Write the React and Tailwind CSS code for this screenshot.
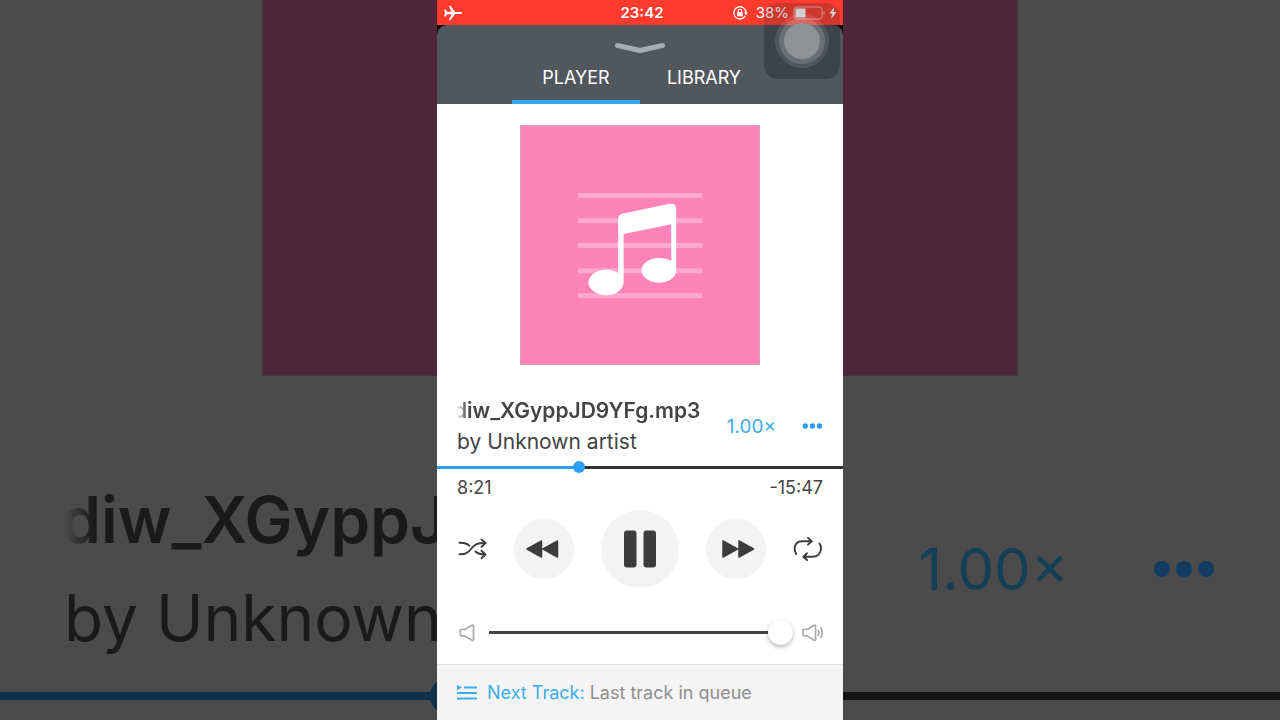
import React, { useState } from 'react';

const TRACK_LENGTH = 1448;

const formatTime = (seconds) => {
    const minutes = Math.floor(seconds / 60);
    return `${minutes}:${(seconds % 60).toString().padStart(2, '0')}`;
};

// Enlarged, dimmed player that fills the page on both sides of the phone
const Backdrop = ({ title, artist, progress }) => (
    <div aria-hidden="true" className="absolute inset-0 overflow-hidden bg-[#4b4b4b] flex flex-col">
        <div className="w-[59%] h-[376px] shrink-0 mx-auto bg-[#4d2637] border-x border-b border-[#44353c]" />
        <div className="mt-[95px] pl-16 pr-[65px] flex items-center justify-between shrink-0">
            <div className="text-[64px] leading-[98px] text-[#1a1a1a] whitespace-nowrap">
                <div className="font-semibold -indent-[3px] [mask-image:linear-gradient(to_right,transparent,black_30px)]">{title}</div>
                <div>{artist}</div>
            </div>
            <div className="flex items-center gap-[84px]">
                <span className="text-[58px] leading-[98px] text-[#153f56]">1.00×</span>
                <svg className="w-[62px] h-[18px] fill-[#123c63]" viewBox="0 0 62 18">
                    <circle cx="9" cy="9" r="8" />
                    <circle cx="31" cy="9" r="8" />
                    <circle cx="53" cy="9" r="8" />
                </svg>
            </div>
        </div>
        <div className="mt-[11px] h-9 shrink-0 flex items-center">
            <div className="h-2 bg-[#10304a]" style={{ width: `${progress * 100}%` }} />
            <div className="w-9 h-9 -mx-[18px] rounded-full bg-[#10304a]" />
            <div className="h-2 flex-1 bg-[#141414]" />
        </div>
    </div>
);

const StatusBar = () => (
    <div className="h-[25px] px-[6px] bg-[#ff3b2d] text-white text-[15px] leading-[25px] grid grid-cols-3 items-center">
        <svg className="w-5 h-4 fill-white" viewBox="0 0 20 16">
            <path d="M1.200 4.500h1.300l1.800 2.200 4.200.100L5.800.800h1.700l4.700 6.100 4.800.100c1.100 0 2.200.400 2.200 1s-1.100 1-2.200 1l-4.800.100-4.700 6.100H5.800l2.700-6-4.200.100-1.800 2.200H1.200L1.800 8z" />
        </svg>
        <div className="pl-1 text-center font-semibold">23:42</div>
        <div className="flex items-center justify-end">
            <svg className="w-4 h-4 mr-2" viewBox="0 0 16 16" fill="none">
                <path d="M13.200 10.900A6.100 6.100 0 1 1 14 7.600" stroke="white" strokeWidth="1.300" />
                <path d="M11.900 7.500h4.100L14 10.200z" fill="white" />
                <rect x="5.100" y="7.100" width="5.600" height="4.200" rx=".6" fill="white" />
                <path d="M6.200 7.300V5.900a1.700 1.700 0 0 1 3.400 0v1.400" stroke="white" strokeWidth="1.100" />
            </svg>
            <span className="mr-1">38%</span>
            <svg className="w-8 h-4" viewBox="0 0 32 16" fill="none">
                <rect x="1" y="2" width="28" height="12" rx="2.500" stroke="white" strokeOpacity=".6" />
                <rect x="2.500" y="3.500" width="10" height="9" fill="white" />
                <path d="M30.500 6v4c1.400-.6 1.400-3.400 0-4z" fill="white" fillOpacity=".6" />
            </svg>
            <svg className="w-2 h-3 ml-1 fill-white" viewBox="0 0 8 12">
                <path d="M5.300 0 .3 6.800h2.900L2 12l5.600-7H4.500z" />
            </svg>
        </div>
    </div>
);

// Floats over the status bar and header, lighter where the status bar shows through
const AssistiveTouch = () => (
    <button aria-label="AssistiveTouch" className="absolute z-10 top-[3px] right-[3px] w-[76px] h-[76px] rounded-[14px] bg-[linear-gradient(#25262e38_22px,#25262e6b_22px)] flex items-center justify-center">
        <span className="w-[54px] h-[54px] rounded-full bg-white/10 flex items-center justify-center">
            <span className="w-[46px] h-[46px] rounded-full bg-white/15 flex items-center justify-center">
                <span className="w-9 h-9 rounded-full bg-[#8f9295]" />
            </span>
        </span>
    </button>
);

const AlbumArt = () => (
    <svg className="w-60 h-60 mx-auto bg-[#fd83b9] border border-[#d5a0b8]" viewBox="0 0 240 240">
        <g fill="white" fillOpacity=".3">
            <rect x="57.500" y="67.500" width="125.500" height="5" />
            <rect x="57.500" y="93" width="125.500" height="5" />
            <rect x="57.500" y="118" width="125.500" height="5" />
            <rect x="57.500" y="143.500" width="125.500" height="5" />
            <rect x="57.500" y="168.500" width="125.500" height="5" />
        </g>
        <path
            fill="white"
            fillRule="evenodd"
            d="M98 94q0-4.500 4-5.500l48-10q6-1.200 6.500 4.500V146c0 7-8 12-17.500 12s-17.500-5.600-17.500-12.500S129.500 133 139 133c5 0 9.500 1.200 12.500 3.200V99.200L103.500 109v48c0 8-8 13.700-17.500 13.700s-18-5.900-18-12.900S76.500 145 86 145c4.800 0 9 1.200 12 3.500z"
        />
    </svg>
);

const App = () => {
    const [tab, setTab] = useState('PLAYER');
    const [position, setPosition] = useState(501);
    const [volume, setVolume] = useState(100);

    const played = (position / TRACK_LENGTH) * 100;

    return (
        <div className="relative min-h-screen flex justify-center font-['Inter',sans-serif]">
            <Backdrop title="diw_XGyppJ" artist="by Unknown" progress={0.35} />
            <div className="relative w-full max-w-[406px] flex flex-col bg-white">
                <StatusBar />
                <AssistiveTouch />
                <header className="bg-black">
                    <div className="rounded-t-[10px] bg-[#50585e] flex flex-col items-center">
                        <button aria-label="Close player" className="mt-[17px] h-3">
                            <svg className="w-[52px] h-3" viewBox="0 0 52 12" fill="none">
                                <path d="M3.500 3.500 26 8.500l22.500-5" stroke="#a9acaf" strokeWidth="5" strokeLinecap="round" strokeLinejoin="round" />
                            </svg>
                        </button>
                        <nav className="mt-[6px] flex">
                            {['PLAYER', 'LIBRARY'].map((name) => (
                                <button
                                    key={name}
                                    onClick={() => setTab(name)}
                                    className={`w-32 h-11 pb-1 text-[18px] leading-8 text-white border-b-4 ${tab === name ? 'border-[#33a9f5]' : 'border-transparent'}`}
                                >
                                    {name}
                                </button>
                            ))}
                        </nav>
                    </div>
                </header>

                <main className="flex-1 flex flex-col pt-[21px] text-[#444]">
                    <AlbumArt />
                    <div className="mt-[30px] px-5 flex items-center justify-between">
                        <div className="text-[21px] leading-[31px] whitespace-nowrap">
                            <h1 className="font-semibold -indent-[3px] [mask-image:linear-gradient(to_right,transparent,black_10px)]">diw_XGyppJD9YFg.mp3</h1>
                            <p>by Unknown artist</p>
                        </div>
                        <div className="flex items-center gap-[26px]">
                            <button className="text-[19px] leading-[31px] text-[#41aae6]">1.00×</button>
                            <button aria-label="More">
                                <svg className="w-[21px] h-[6px] fill-[#2f9bec]" viewBox="0 0 21 6">
                                    <circle cx="3.300" cy="3" r="2.700" />
                                    <circle cx="10.400" cy="3" r="2.700" />
                                    <circle cx="17.500" cy="3" r="2.700" />
                                </svg>
                            </button>
                        </div>
                    </div>

                    <input
                        type="range"
                        aria-label="Track position"
                        min="0"
                        max={TRACK_LENGTH}
                        value={position}
                        onChange={(e) => setPosition(Number(e.target.value))}
                        className="mt-1 w-full h-3 appearance-none bg-no-repeat bg-center bg-[length:100%_3px] [&::-webkit-slider-thumb]:appearance-none [&::-webkit-slider-thumb]:w-3 [&::-webkit-slider-thumb]:h-3 [&::-webkit-slider-thumb]:rounded-full [&::-webkit-slider-thumb]:bg-[#2f9ff5]"
                        style={{ backgroundImage: `linear-gradient(to right, #2f9ff5 ${played}%, #333 ${played}%)` }}
                    />
                    <div className="mt-1 px-5 flex justify-between text-[18px] leading-[22px]">
                        <span>{formatTime(position)}</span>
                        <span>-{formatTime(TRACK_LENGTH - position)}</span>
                    </div>

                    <div className="mt-[11px] px-5 flex items-center justify-between">
                        <button aria-label="Shuffle">
                            <svg className="w-[30px] h-6" viewBox="0 0 30 24" fill="none" stroke="#3c3c3c" strokeWidth="1.900" strokeLinecap="round" strokeLinejoin="round">
                                <path d="M2.500 5.800c4.500-.2 7.200.3 9.800 2.800M2.500 17.300c5.500.2 8-.8 11.500-5.300S20.500 5.800 28.500 6" />
                                <path d="M18.500 14.500c2 2 4.500 3 10 3M24.500 2.500 28.500 6l-4 3.700M24.500 13.800l4 3.700-4 3.700" />
                            </svg>
                        </button>
                        <button aria-label="Previous" className="w-15 h-15 rounded-full bg-[#f3f3f3] flex items-center justify-center">
                            <svg className="w-[34px] h-5 mr-1" viewBox="0 0 34 20" fill="#3c3c3c" stroke="#3c3c3c" strokeWidth="1.500" strokeLinejoin="round">
                                <path d="M16.500 2v16L2 10zM32.500 2v16L18 10z" />
                            </svg>
                        </button>
                        <button aria-label="Pause" className="w-[78px] h-[78px] rounded-full bg-[#f3f3f3] flex items-center justify-center">
                            <svg className="w-8 h-[38px] fill-[#3c3c3c]" viewBox="0 0 32 38">
                                <rect x="0" y=".5" width="12.500" height="37" rx="3" />
                                <rect x="19.500" y=".5" width="12.500" height="37" rx="3" />
                            </svg>
                        </button>
                        <button aria-label="Next" className="w-15 h-15 rounded-full bg-[#f3f3f3] flex items-center justify-center">
                            <svg className="w-[34px] h-5 ml-1" viewBox="0 0 34 20" fill="#3c3c3c" stroke="#3c3c3c" strokeWidth="1.500" strokeLinejoin="round">
                                <path d="M2 2v16l14.500-8zM18 2v16l14.500-8z" />
                            </svg>
                        </button>
                        <button aria-label="Repeat">
                            <svg className="w-[30px] h-6" viewBox="0 0 30 24" fill="none" stroke="#3c3c3c" strokeWidth="1.900" strokeLinecap="round" strokeLinejoin="round">
                                <path d="M3.200 17C-.3 11 2.200 4.200 9 4.200h9.500M15 .9l3.700 3.300L15 7.600" />
                                <path d="M26.600 6.500c3.500 6-.1 13.200-6.600 13.200h-9.500M14 16.300l-3.700 3.400 3.700 3.300" />
                            </svg>
                        </button>
                    </div>

                    <div className="mt-8 mb-[19px] px-5 flex items-center">
                        <svg className="w-5 h-5 mr-3" viewBox="0 0 20 20" fill="none" stroke="#aaa" strokeWidth="1.700" strokeLinejoin="round">
                            <path d="M3.300 6.500h4.200l7.500-4.300q1.500-.5 1.500 1v13q0 1.500-1.500 1l-7.500-4.300H4.500q-1.200 0-1.200-1.200z" />
                        </svg>
                        <input
                            type="range"
                            aria-label="Volume"
                            min="0"
                            max="100"
                            value={volume}
                            onChange={(e) => setVolume(Number(e.target.value))}
                            className="flex-1 min-w-0 h-[25px] appearance-none bg-no-repeat bg-center bg-[length:100%_3px] bg-linear-to-r from-[#444] to-[#444] [&::-webkit-slider-thumb]:appearance-none [&::-webkit-slider-thumb]:w-[25px] [&::-webkit-slider-thumb]:h-[25px] [&::-webkit-slider-thumb]:rounded-full [&::-webkit-slider-thumb]:bg-white [&::-webkit-slider-thumb]:shadow-[0_2px_4px_rgba(0,0,0,0.3)]"
                        />
                        <svg className="w-6 h-5 ml-[6px]" viewBox="0 0 24 20" fill="none" stroke="#aaa" strokeWidth="1.700" strokeLinecap="round" strokeLinejoin="round">
                            <path d="M4 6.500h4.200l6.800-4.300q1.500-.5 1.500 1v13q0 1.500-1.500 1l-6.800-4.300H5.200q-1.200 0-1.200-1.200z" />
                            <path d="M19.200 7.200q1.500 2.500 0 5M21.800 4.900q2.800 4.800 0 9.600" />
                        </svg>
                    </div>
                </main>

                <footer className="h-14 px-5 flex items-center bg-[#f4f4f4] border-t border-[#e3e3e3] text-[18px] leading-6 text-[#8e8e8e]">
                    <svg className="w-5 h-4 mr-[10px]" viewBox="0 0 20 16" fill="#3aaeea">
                        <path d="M0 0 5 2.600 0 5.200z" />
                        <rect x="7" y="1.500" width="13" height="2" />
                        <rect x="0" y="7" width="20" height="2" />
                        <rect x="0" y="12.500" width="20" height="2" />
                    </svg>
                    <p className="whitespace-pre"><span className="text-[#3aaeea]">Next Track:</span> Last track in queue</p>
                </footer>
            </div>
        </div>
    );
};

export default App;
